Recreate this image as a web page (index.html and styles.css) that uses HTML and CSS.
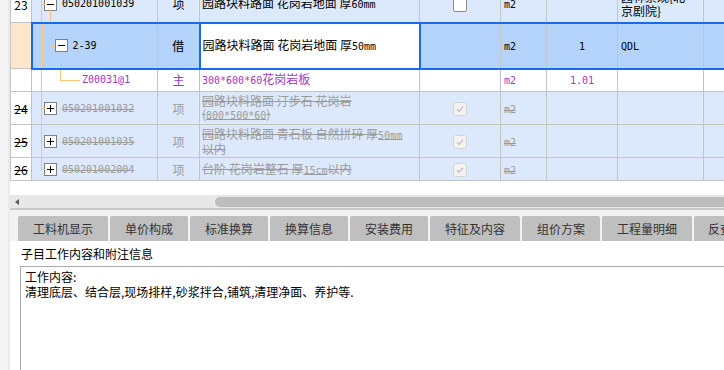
FILE: index.html
```html
<!DOCTYPE html>
<html lang="zh">
<head>
<meta charset="utf-8">
<link rel="stylesheet" href="styles.css">
</head>
<body>
<div class="side"></div>
<div class="main">
  <div class="gridwrap">
    <table class="grid">
      <colgroup>
        <col class="c-no"><col class="c-code"><col class="c-type"><col class="c-name"><col class="c-chk"><col class="c-unit"><col class="c-qty"><col class="c-exp"><col class="c-rest">
      </colgroup>
      <tr class="r23">
        <td class="no">23</td>
        <td class="code"><span class="ln v1"></span><span class="ln h1"></span><span class="ln v2b"></span>
          <div class="in lv0"><svg class="box" width="13" height="13" viewBox="0 0 13 13"><rect x=".5" y=".5" width="12" height="12" fill="#fff" stroke="#808080"/><path d="M3 6.5h7" stroke="#000"/></svg><span class="l">050201001039</span></div></td>
        <td class="type">项</td>
        <td class="name">园路块料路面 花岗岩地面 厚<span class="l">60mm</span></td>
        <td class="chk"><span class="cb"></span></td>
        <td class="unit"><span class="l">m2</span></td>
        <td class="qty"></td>
        <td class="exp">园林景观{北<br>京剧院}</td>
        <td></td>
      </tr>
      <tr class="sel">
        <td class="no"></td>
        <td class="code"><span class="ln v1"></span><span class="ln v2t"></span><span class="ln h2"></span><span class="ln v3b"></span>
          <div class="in lv1"><svg class="box" width="13" height="13" viewBox="0 0 13 13"><rect x=".5" y=".5" width="12" height="12" fill="#fff" stroke="#808080"/><path d="M3 6.5h7" stroke="#000"/></svg><span class="l">2-39</span></div></td>
        <td class="type">借</td>
        <td class="name active">园路块料路面 花岗岩地面 厚<span class="l">50mm</span></td>
        <td class="chk"></td>
        <td class="unit"><span class="l">m2</span></td>
        <td class="qty"><span class="l">1</span></td>
        <td class="exp"><span class="l">QDL</span></td>
        <td></td>
      </tr>
      <tr class="mat">
        <td class="no"></td>
        <td class="code"><span class="ln v1"></span><span class="ln v3t"></span><span class="ln h3"></span>
          <div class="in lv2"><span class="l">Z00031@1</span></div></td>
        <td class="type">主</td>
        <td class="name"><span class="l">300*600*60</span>花岗岩板</td>
        <td class="chk"></td>
        <td class="unit"><span class="l">m2</span></td>
        <td class="qty"><span class="l">1.01</span></td>
        <td class="exp"></td>
        <td></td>
      </tr>
      <tr class="del r24">
        <td class="no"><s>24</s></td>
        <td class="code"><span class="ln v1"></span><span class="ln h1"></span>
          <div class="in lv0"><svg class="box" width="13" height="13" viewBox="0 0 13 13"><rect x=".5" y=".5" width="12" height="12" fill="#fff" stroke="#808080"/><path d="M3 6.5h7M6.5 3v7" stroke="#000"/></svg><s class="l">050201001032</s></div></td>
        <td class="type">项</td>
        <td class="name"><s>园路块料路面 汀步石 花岗岩<br>(<span class="l">800*500*60</span>)</s></td>
        <td class="chk"><svg class="dcb" width="14" height="14" viewBox="0 0 14 14"><rect x=".5" y=".5" width="13" height="13" rx="2" fill="#f2f2f2" stroke="#d4d4d4"/><path d="M4 7.2l2 2 4-4.4" fill="none" stroke="#c4c4c4" stroke-width="1.3"/></svg></td>
        <td class="unit"><s class="l">m2</s></td>
        <td class="qty"></td>
        <td class="exp"></td>
        <td></td>
      </tr>
      <tr class="del r25">
        <td class="no"><s>25</s></td>
        <td class="code"><span class="ln v1"></span><span class="ln h1"></span>
          <div class="in lv0"><svg class="box" width="13" height="13" viewBox="0 0 13 13"><rect x=".5" y=".5" width="12" height="12" fill="#fff" stroke="#808080"/><path d="M3 6.5h7M6.5 3v7" stroke="#000"/></svg><s class="l">050201001035</s></div></td>
        <td class="type">项</td>
        <td class="name"><s>园路块料路面 青石板 自然拼碎 厚<span class="l">50mm</span><br>以内</s></td>
        <td class="chk"><svg class="dcb" width="14" height="14" viewBox="0 0 14 14"><rect x=".5" y=".5" width="13" height="13" rx="2" fill="#f2f2f2" stroke="#d4d4d4"/><path d="M4 7.2l2 2 4-4.4" fill="none" stroke="#c4c4c4" stroke-width="1.3"/></svg></td>
        <td class="unit"><s class="l">m2</s></td>
        <td class="qty"></td>
        <td class="exp"></td>
        <td></td>
      </tr>
      <tr class="del r26">
        <td class="no"><s>26</s></td>
        <td class="code"><span class="ln v1h"></span><span class="ln h1"></span>
          <div class="in lv0"><svg class="box" width="13" height="13" viewBox="0 0 13 13"><rect x=".5" y=".5" width="12" height="12" fill="#fff" stroke="#808080"/><path d="M3 6.5h7M6.5 3v7" stroke="#000"/></svg><s class="l">050201002004</s></div></td>
        <td class="type">项</td>
        <td class="name"><s>台阶 花岗岩整石 厚<span class="l">15cm</span>以内</s></td>
        <td class="chk"><svg class="dcb" width="14" height="14" viewBox="0 0 14 14"><rect x=".5" y=".5" width="13" height="13" rx="2" fill="#f2f2f2" stroke="#d4d4d4"/><path d="M4 7.2l2 2 4-4.4" fill="none" stroke="#c4c4c4" stroke-width="1.3"/></svg></td>
        <td class="unit"><s class="l">m2</s></td>
        <td class="qty"></td>
        <td class="exp"></td>
        <td></td>
      </tr>
    </table>
  </div>
  <div class="hscroll"><span class="arrow"></span><span class="thumb"></span></div>
  <div class="split"></div>
  <div class="tabs">
    <div class="tab w5">工料机显示</div>
    <div class="tab w4">单价构成</div>
    <div class="tab w4">标准换算</div>
    <div class="tab w4">换算信息</div>
    <div class="tab w4">安装费用</div>
    <div class="tab w5">特征及内容</div>
    <div class="tab w4">组价方案</div>
    <div class="tab w5">工程量明细</div>
    <div class="tab w7">反查图形工程量</div>
  </div>
  <div class="label">子目工作内容和附注信息</div>
  <div class="note">工作内容:<br>清理底层、结合层,现场排样,砂浆拌合,铺筑,清理净面、养护等.</div>
</div>
</body>
</html>
```

FILE: styles.css
```css
* { box-sizing: border-box; margin: 0; padding: 0; }
html, body { width: 724px; height: 370px; overflow: hidden; background: #fff; }
body {
  display: flex;
  font-family: "Noto Sans CJK SC", "Noto Sans", sans-serif;
  font-size: 12px;
  color: #000;
}
.side { width: 10px; flex: none; background: #f4f4f4; border-right: 2px solid #ebebeb; }
.main { flex: 1; min-width: 0; display: flex; flex-direction: column; overflow: hidden; }

.gridwrap { height: 195px; flex: none; overflow: hidden; }
.grid { border-collapse: collapse; table-layout: fixed; width: 753px; margin-top: -14px; }
.c-no { width: 21px; } .c-code { width: 126px; } .c-type { width: 42px; } .c-name { width: 220px; }
.c-chk { width: 81px; } .c-unit { width: 46px; } .c-qty { width: 71px; } .c-exp { width: 86px; } .c-rest { width: 60px; }

.grid td {
  border: 1px solid #c4c4c4;
  padding: 0;
  white-space: nowrap;
  overflow: hidden;
  line-height: 14px;
  vertical-align: middle;
  background: #dce9fc;
}
.grid td.no { background: #fff; text-align: center; }
.l { font-family: "DejaVu Sans Mono", "Liberation Mono", monospace; font-size: 10px; }
s { text-decoration: line-through; }

.r23 td { height: 36px; }
.sel td { height: 46px; background: #b4d4fc; border-top: 2px solid #1769f2; border-bottom: 2px solid #1769f2; }
.sel td.no { background: #fde6c9; border-top: 1px solid #c4c4c4; border-bottom: 1px solid #c4c4c4; }
.sel td.code { border-left: 2px solid #1769f2; }
.sel td.active { background: #fff; border-left: 2px solid #1769f2; border-right: 2px solid #1769f2; }
.mat td { height: 23px; background: #fff; color: #a239c4; }
.r24 td, .r25 td { height: 33px; }
.r26 td { height: 23px; }
.del td { color: #9a9a9a; line-height: 13px; }
.del td.no { color: #000; }

.code { position: relative; }
.in { display: flex; align-items: center; gap: 5px; }
.in.lv0 { padding-left: 12px; }
.in.lv1 { padding-left: 22px; }
.in.lv2 { padding-left: 50px; }
.box { flex: none; display: block; }
.ln { position: absolute; background: #fcc474; }
.v1 { left: 9px; top: 0; bottom: 0; width: 1px; }
.v1h { left: 9px; top: 0; height: 50%; width: 1px; }
.h1 { left: 9px; top: 50%; width: 4px; height: 1px; }
.v2b { left: 18px; top: calc(50% + 6px); bottom: 0; width: 1px; }
.v2t { left: 18px; top: 0; height: 50%; width: 1px; }
.h2 { left: 18px; top: 50%; width: 4px; height: 1px; }
.v3b { left: 28px; top: calc(50% + 6px); bottom: 0; width: 1px; }
.v3t { left: 28px; top: 0; height: 50%; width: 1px; }
.h3 { left: 28px; top: 50%; width: 20px; height: 1px; }

.type { text-align: center; }
.name { padding-left: 2px !important; }
.chk { text-align: center; }
.cb { display: inline-block; width: 14px; height: 14px; border: 1px solid #8a8a8a; border-radius: 2px; background: #fff; vertical-align: middle; }
.dcb { display: inline-block; vertical-align: middle; }
.unit { padding-left: 3px !important; }
.qty { text-align: center; }
.exp { padding-left: 3px !important; }

.hscroll { height: 13px; flex: none; background: #e8e8e8; display: flex; align-items: center; padding: 2px 0 1px 5px; }
.arrow { width: 0; height: 0; border-right: 4px solid #5a5a5a; border-top: 3px solid transparent; border-bottom: 3px solid transparent; }
.thumb { margin-left: 196px; flex: 1; height: 10px; border-radius: 5px 0 0 5px; background: #bdbdbd; }
.split { height: 2px; flex: none; background: #cacaca; }

.tabs { height: 31px; flex: none; background: #f2f2f2; display: flex; gap: 2px; padding: 6px 0 0 8px; }
.tab {
  flex: none;
  height: 25px;
  line-height: 25px;
  text-align: center;
  background: #bfbfbf;
  color: #333;
  border-radius: 2px 2px 0 0;
}
.w5 { width: 90px; }
.w4 { width: 78px; }
.w7 { width: 120px; text-align: left; padding-left: 14px; }

.label { height: 25px; flex: none; line-height: 26px; padding-left: 11px; }
.note {
  flex: 1;
  margin-left: 10px;
  border-top: 1px solid #a9a9a9;
  border-left: 1px solid #a9a9a9;
  padding: 2px 0 0 4px;
  line-height: 15px;
}
```
